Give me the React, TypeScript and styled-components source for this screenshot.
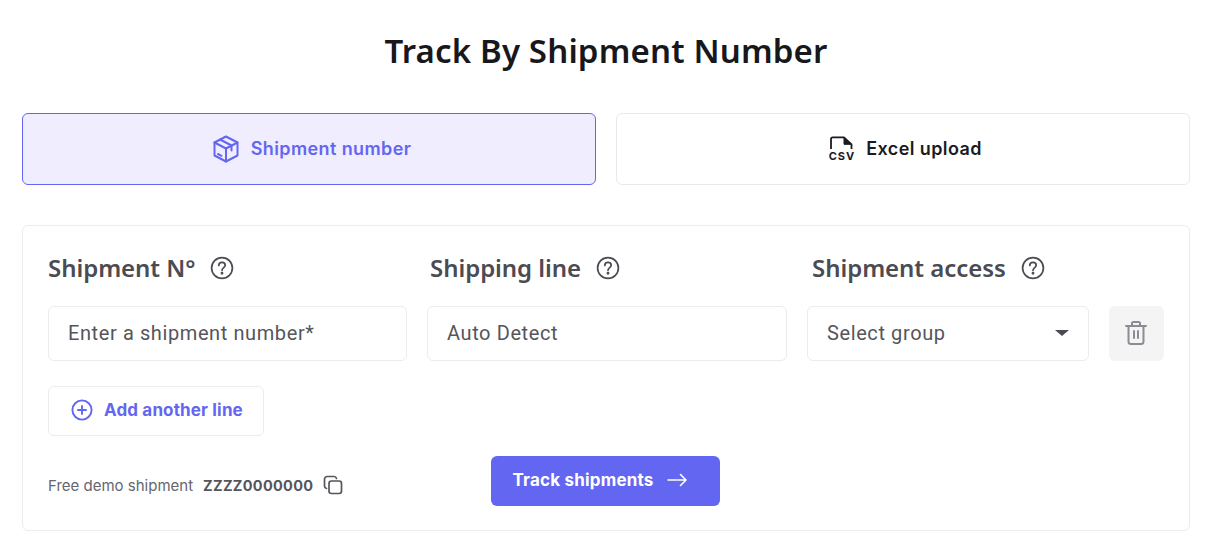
import React from "react";
import styled, { createGlobalStyle } from "styled-components";

const GlobalStyle = createGlobalStyle`
    * {
        box-sizing: border-box;
    }
    html, body {
        margin: 0;
        background: #fff;
    }
`;

const PackageIcon = () => (
    <svg width="28" height="28" viewBox="0 0 28 28" fill="none" stroke="currentColor" strokeWidth="2" strokeLinejoin="round" strokeLinecap="round">
        <path d="M14 1.5 25.5 7.5V20.5L14 26.5 2.5 20.5V7.5Z" />
        <path d="M2.5 7.5 14 13.5 25.5 7.5M14 13.5V26.5" />
        <path d="M8 4.5 19.5 10.5V15.5M6 19l3.5 1.8" />
    </svg>
);

const CsvIcon = () => (
    <svg width="26" height="28" viewBox="0 0 26 28" fill="none">
        <path d="M2 14V4.2C2 3 2.6 2.3 3.8 2.3H15L22.5 9.3V14" stroke="currentColor" strokeWidth="1.8" strokeLinejoin="round" />
        <path d="M15 2.5V9.3H22.5Z" fill="currentColor" stroke="currentColor" strokeWidth="1" strokeLinejoin="round" />
        <text x="13" y="25" textAnchor="middle" fontFamily="Inter, sans-serif" fontSize="11" fontWeight="700" letterSpacing="1" fill="currentColor">CSV</text>
    </svg>
);

const HelpIcon = () => (
    <svg width="24" height="24" viewBox="0 0 24 24" fill="none" stroke="currentColor" strokeWidth="1.7" strokeLinecap="round">
        <circle cx="12" cy="12" r="10.4" />
        <path d="M8.8 9.4C8.8 7.5 10.3 6.4 12 6.4S15.2 7.6 15.2 9.3C15.2 11.6 12 11.7 12 14.3" />
        <circle cx="12" cy="17.3" r="0.6" fill="currentColor" />
    </svg>
);

const TrashIcon = () => (
    <svg width="24" height="26" viewBox="0 0 24 26" fill="none" stroke="currentColor" strokeWidth="2" strokeLinecap="round" strokeLinejoin="round">
        <path d="M2 6H22M8 6V3.5C8 2.6 8.6 2 9.5 2H14.5C15.4 2 16 2.6 16 3.5V6" />
        <path d="M4.5 6V21.5C4.5 23 5.5 24 7 24H17C18.5 24 19.5 23 19.5 21.5V6" />
        <path d="M10 11V18M14 11V18" />
    </svg>
);

const PlusCircleIcon = () => (
    <svg width="22" height="22" viewBox="0 0 22 22" fill="none" stroke="currentColor" strokeWidth="1.9" strokeLinecap="round">
        <circle cx="11" cy="11" r="9.6" />
        <path d="M11 7V15M7 11H15" />
    </svg>
);

const CopyIcon = () => (
    <svg width="20" height="20" viewBox="0 0 20 20" fill="none" stroke="currentColor" strokeWidth="1.7" strokeLinecap="round" strokeLinejoin="round">
        <path d="M3.5 13.5C2.3 13.2 1.5 12.3 1.5 11V4.2C1.5 2.6 2.6 1.5 4.2 1.5H11C12.2 1.5 13.2 2.3 13.5 3.5" />
        <rect x="6" y="6" width="12.5" height="12.5" rx="2.4" />
    </svg>
);

const ArrowIcon = () => (
    <svg width="20" height="14" viewBox="0 0 20 14" fill="none" stroke="currentColor" strokeWidth="1.6" strokeLinecap="round" strokeLinejoin="round">
        <path d="M1 7H19M13.5 1.5 19 7 13.5 12.5" />
    </svg>
);

const App = () => {
    return (
        <Page>
            <GlobalStyle />
            <Title>Track By Shipment Number</Title>
            <Tabs>
                <Tab $active>
                    <PackageIcon />
                    Shipment number
                </Tab>
                <Tab>
                    <CsvIcon />
                    Excel upload
                </Tab>
            </Tabs>
            <Card>
                <Labels>
                    <LabelCell>
                        <Label>Shipment N°</Label>
                        <HelpIcon />
                    </LabelCell>
                    <LabelCell>
                        <Label>Shipping line</Label>
                        <HelpIcon />
                    </LabelCell>
                    <LabelCell>
                        <Label>Shipment access</Label>
                        <HelpIcon />
                    </LabelCell>
                </Labels>
                <Fields>
                    <Field>Enter a shipment number*</Field>
                    <Field>Auto Detect</Field>
                    <Field>
                        Select group
                        <Caret />
                    </Field>
                    <DeleteButton>
                        <TrashIcon />
                    </DeleteButton>
                </Fields>
                <AddButton>
                    <PlusCircleIcon />
                    Add another line
                </AddButton>
                <Footer>
                    <Demo>
                        <DemoText>Free demo shipment</DemoText>
                        <DemoNumber>ZZZZ0000000</DemoNumber>
                        <CopyIcon />
                    </Demo>
                    <SubmitButton>
                        Track shipments
                        <ArrowIcon />
                    </SubmitButton>
                </Footer>
            </Card>
        </Page>
    );
};

const Page = styled.div`
    width: 1207px;
    height: 550px;
    overflow: hidden;
    padding: 28px 17px 0 22px;
    color: #1a1a1f;
`;

const Title = styled.h1`
    margin: 0 0 40px;
    height: 45px;
    font-family: "Noto Sans", sans-serif;
    font-size: 33px;
    font-weight: 600;
    line-height: 45px;
    letter-spacing: 0.15px;
    text-align: center;
    color: #17171c;
`;

const Tabs = styled.div`
    display: grid;
    grid-template-columns: 1fr 1fr;
    gap: 20px;
    margin-bottom: 40px;
`;

const Tab = styled.div<{ $active?: boolean }>`
    display: flex;
    align-items: center;
    justify-content: center;
    gap: 11px;
    height: 72px;
    padding: 0 0 1px 5px;
    border-radius: 6px;
    border: 1px solid ${({ $active }) => ($active ? "#6366f1" : "#e9e9ee")};
    background: ${({ $active }) => ($active ? "#f0eefe" : "#fff")};
    color: ${({ $active }) => ($active ? "#6366f1" : "#1a1a22")};
    font-family: Inter, sans-serif;
    font-size: 18px;
    font-weight: 600;
    letter-spacing: 0.4px;
`;

const Card = styled.div`
    height: 306px;
    padding: 24px 25px 0;
    border: 1px solid #ececf0;
    border-radius: 6px;
`;

const Labels = styled.div`
    display: flex;
    height: 36px;
    margin-bottom: 20px;
    color: #4b4b52;
`;

const LabelCell = styled.div`
    display: flex;
    flex-shrink: 0;
    align-items: center;
    gap: 15px;
    width: 382px;
`;

const Label = styled.span`
    padding-bottom: 1px;
    font-family: "Noto Sans", sans-serif;
    font-size: 24px;
    font-weight: 600;
    letter-spacing: -0.05px;
`;

const Fields = styled.div`
    display: grid;
    grid-template-columns: 359px 360px 282px 55px;
    gap: 20px;
    margin-bottom: 25px;
`;

const Field = styled.div`
    display: flex;
    align-items: center;
    justify-content: space-between;
    height: 55px;
    padding: 0 19px 2px 19px;
    border: 1px solid #ececf0;
    border-radius: 6px;
    font-family: Roboto, sans-serif;
    font-size: 20px;
    letter-spacing: 0.6px;
    color: #55555b;
`;

const Caret = styled.span`
    width: 0;
    height: 0;
    border-left: 7px solid transparent;
    border-right: 7px solid transparent;
    border-top: 6px solid #4b4b52;
`;

const DeleteButton = styled.div`
    display: flex;
    align-items: center;
    justify-content: center;
    height: 55px;
    padding: 0 1px 2px 0;
    border-radius: 6px;
    background: #f4f4f5;
    color: #8b8b94;
`;

const AddButton = styled.div`
    display: inline-flex;
    align-items: center;
    gap: 11px;
    height: 50px;
    padding: 0 20px 2px 22px;
    border: 1px solid #ececf0;
    border-radius: 6px;
    color: #6366f1;
    font-family: Inter, sans-serif;
    font-size: 17px;
    font-weight: 700;
    letter-spacing: 0.15px;
`;

const Footer = styled.div`
    display: flex;
    align-items: center;
    margin-top: 20px;
`;

const Demo = styled.div`
    display: flex;
    align-items: center;
    width: 443px;
    padding-top: 8px;
    color: #55555b;
    font-family: Inter, sans-serif;
`;

const DemoText = styled.span`
    font-size: 15px;
    color: #66666e;
    margin-right: 10px;
`;

const DemoNumber = styled.span`
    font-size: 14.5px;
    font-weight: 700;
    letter-spacing: 0.3px;
    margin-right: 10px;
`;

const SubmitButton = styled.div`
    display: flex;
    align-items: center;
    justify-content: center;
    gap: 13px;
    width: 229px;
    height: 50px;
    padding: 0 12px 3px 0;
    border-radius: 6px;
    background: #6366f1;
    color: #fff;
    font-family: Inter, sans-serif;
    font-size: 17px;
    font-weight: 700;
    letter-spacing: 0.2px;
`;

export default App;
